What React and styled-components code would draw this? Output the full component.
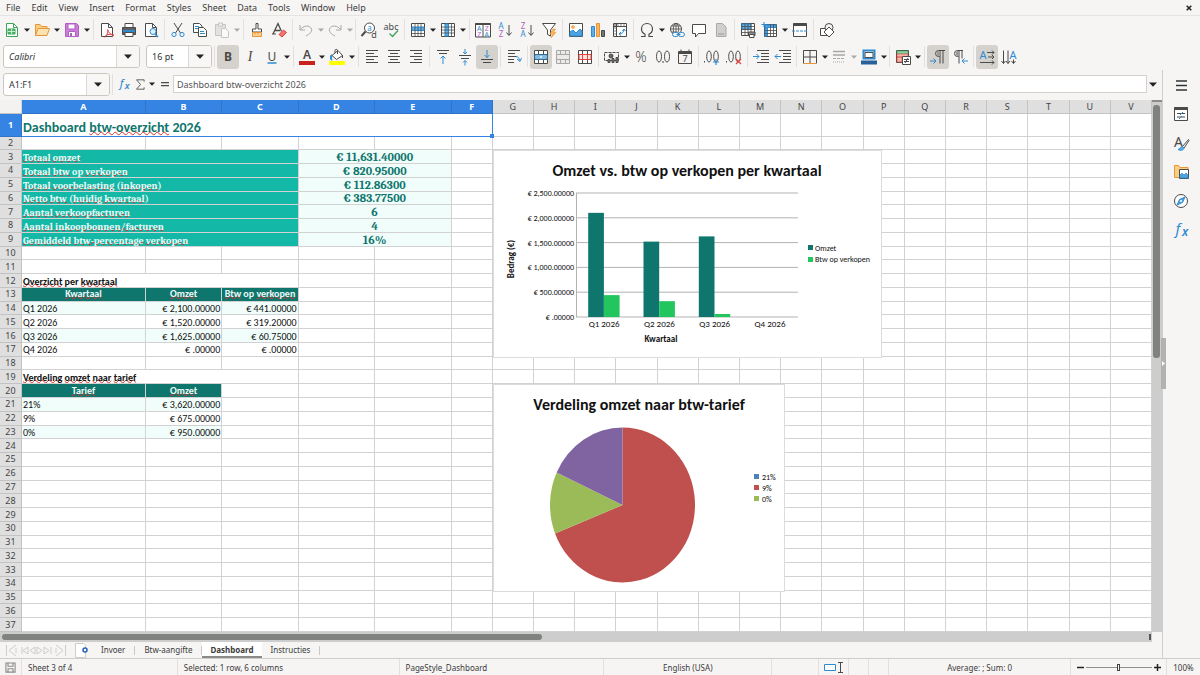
import React from "react";
import styled, { createGlobalStyle, css } from "styled-components";

const UI_FONT = `"Noto Sans", "Open Sans", sans-serif`;
const CELL_FONT = `Carlito, Lato, "Noto Sans", sans-serif`;
const SERIF_FONT = `Caladea, "Noto Serif", "DejaVu Serif Condensed", "DejaVu Serif", serif`;

const GlobalStyle = createGlobalStyle`
    * { box-sizing: border-box; }
    body {
        margin: 0;
        background: #f6f5f4;
        color: #3b3b3b;
        font-family: ${UI_FONT};
        font-size: 9px;
    }
    button, input {
        font: inherit;
        color: inherit;
        margin: 0;
        padding: 0;
        border: 0;
        background: none;
    }
`;

const Page = styled.div`
    display: flex;
    flex-direction: column;
    height: 100vh;
    overflow: hidden;
`;

/* ---------- menu and toolbars ---------- */

const MenuBar = styled.nav`
    display: flex;
    align-items: center;
    height: 16px;
    padding: 0 6px 0 6px;
    gap: 11px;
    border-bottom: 1px solid #e6e4e2;
`;

const MenuItem = styled.button`
    line-height: 16px;
`;

const CloseButton = styled.button`
    margin-left: auto;
    width: 10px;
    height: 16px;
    display: flex;
    align-items: center;
    justify-content: center;
`;

const Toolbar = styled.div`
    display: flex;
    align-items: center;
    height: 27px;
    padding-left: ${(p) => (p.$inset ? "3px" : "1px")};
`;

const Separator = styled.span`
    width: 1px;
    height: 21px;
    margin: 0 2px;
    background: #e2e0de;
    flex: none;
`;

const ToolButton = styled.button`
    width: 22px;
    height: 24px;
    flex: none;
    display: flex;
    align-items: center;
    justify-content: center;
    border-radius: 3px;
    opacity: ${(p) => (p.disabled ? 0.45 : 1)};
    background: ${(p) => (p.$active ? "#d5d1cd" : "transparent")};
`;

const DropButton = styled.button`
    width: ${(p) => (p.$narrow ? "7px" : "8px")};
    height: 24px;
    flex: none;
    display: flex;
    align-items: center;
    justify-content: center;
    opacity: ${(p) => (p.disabled ? 0.35 : 1)};
`;

const Combo = styled.div`
    display: flex;
    width: ${(p) => p.$width};
    height: 23px;
    flex: none;
    margin-right: ${(p) => (p.$spaced ? "6px" : "0")};
    border: 1px solid #cdc7c2;
    border-radius: 3px;
    background: #fff;
    overflow: hidden;
`;

const ComboInput = styled.input`
    flex: 1;
    min-width: 0;
    padding-left: 5px;
    color: #2e3436;
    font-style: ${(p) => (p.$italic ? "italic" : "normal")};
`;

const ComboButton = styled.button`
    width: 23px;
    border-left: 1px solid #dcd8d4;
    background: #f8f7f6;
    display: flex;
    align-items: center;
    justify-content: center;
`;

/* ---------- formula bar ---------- */

const FormulaBar = styled.div`
    display: flex;
    align-items: center;
    height: 30px;
    padding: 0 3px 2px 3px;
`;

const FormulaInput = styled.input`
    flex: 1;
    min-width: 0;
    height: 18px;
    margin-left: 1px;
    padding-left: 3px;
    border: 1px solid #d3d0cd;
    background: #fff;
    color: #555;
`;

const SmallButton = styled.button`
    width: ${(p) => p.$width || "14px"};
    height: 14px;
    flex: none;
    display: flex;
    align-items: center;
    justify-content: center;
`;

/* ---------- body ---------- */

const Body = styled.div`
    flex: 1;
    min-height: 0;
    display: flex;
`;

const Main = styled.main`
    flex: 1;
    min-width: 0;
    display: flex;
    flex-direction: column;
`;

const SheetArea = styled.div`
    flex: 1;
    min-height: 0;
    display: flex;
`;

const SheetFrame = styled.div`
    position: relative;
    flex: 1;
    min-width: 0;
`;

const sheetGrid = css`
    display: grid;
    grid-template-columns: 22px minmax(0, 496fr) repeat(4, minmax(0, 306fr)) repeat(17, minmax(0, 165fr));
    grid-template-rows: 14px minmax(0, 90fr) repeat(36, minmax(0, 55fr));
`;

const Sheet = styled.table`
    ${sheetGrid}
    width: 100%;
    height: 100%;
    background: #fff;
    font-family: ${CELL_FONT};
    font-size: 10px;
    color: #111;

    thead, tbody, tr { display: contents; }
`;

const HeadCell = styled.th`
    min-width: 0;
    min-height: 0;
    padding: 0;
    display: flex;
    align-items: center;
    justify-content: center;
    overflow: hidden;
    font-family: ${UI_FONT};
    font-size: 9px;
    line-height: 12px;
    font-weight: ${(p) => (p.$selected ? 700 : 400)};
    color: ${(p) => (p.$selected ? "#fff" : "#444")};
    background: ${(p) => (p.$selected ? "#3584e4" : "#dfdfdf")};
    border-right: 1px solid ${(p) => (p.$selected ? "#2f74c8" : "#c3c3c3")};
    border-bottom: 1px solid ${(p) => (p.$selected ? "#2f74c8" : "#c3c3c3")};
`;

const Corner = styled.td`
    padding: 0;
    background: #f3f2f1;
    border-right: 1px solid #d6d6d6;
    border-bottom: 1px solid #c3c3c3;
`;

const looks = {
    title: css`
        font-size: 14px;
        line-height: 18px;
        font-weight: 700;
        color: #0f766e;
        padding-top: 6px;
        overflow: visible;
        position: relative;
        border-right: 1px solid #3584e4;
        border-bottom: 1px solid #3584e4;
    `,
    label: css`
        font-family: ${SERIF_FONT};
        font-weight: 700;
        color: #e9fbf8;
        background: #14b8a6;
        padding-top: 3px;

        span { text-underline-offset: -3px; }
    `,
    figure: css`
        font-family: ${SERIF_FONT};
        font-size: 12px;
        font-weight: 700;
        color: #0f766e;
        background: #f0fdfa;
        justify-content: center;
        padding-top: 1px;
    `,
    section: css`
        font-weight: 700;

        span { text-underline-offset: -2px; }
    `,
    tableHead: css`
        font-weight: 700;
        color: #eefaf8;
        background: #0f766e;
        justify-content: center;
        padding-top: 0;

        span { text-underline-offset: -2px; }
    `,
    band: css`
        background: #f0fdfa;
    `,
};

const Misspelled = styled.span`
    text-decoration: underline wavy #d8302a 1px;
    text-underline-offset: -1px;
    text-decoration-skip-ink: none;
`;

const Cell = styled.td`
    grid-column: span ${(p) => p.colSpan || 1};
    min-width: 0;
    min-height: 0;
    padding: 2px 1px 0;
    display: flex;
    align-items: center;
    justify-content: ${(p) => (p.$right ? "flex-end" : "flex-start")};
    overflow: hidden;
    white-space: pre;
    line-height: 12px;
    border-right: 1px solid #d2d2d2;
    border-bottom: 1px solid #d2d2d2;
    ${(p) => looks[p.$look]}
`;

const FillHandle = styled.i`
    position: absolute;
    right: -2px;
    bottom: -2px;
    width: 4px;
    height: 4px;
    background: #3584e4;
`;

const ChartLayer = styled.div`
    ${sheetGrid}
    position: absolute;
    inset: 0;
`;

const ChartFrame = styled.svg`
    display: block;
    grid-column: 8;
    grid-row: ${(p) => p.$row};
    overflow: visible;
    font-family: ${CELL_FONT};
    fill: #111;
`;

const VerticalScroll = styled.div`
    width: 10px;
    padding: 3px 2px 0 1px;
    background: #cdcdcd;
    border-top: 2px solid #8b8d8b;
`;

const VerticalThumb = styled.div`
    height: 48%;
    border-radius: 3px;
    background: #80827f;
`;

const HorizontalScroll = styled.div`
    height: 10px;
    margin-right: 10px;
    padding: 2px 1px 2px 2px;
    display: flex;
    justify-content: space-between;
    background: #cdcdcd;
`;

const HorizontalThumb = styled.div`
    width: 47%;
    border-radius: 3px;
    background: #80827f;
`;

const ScrollEnd = styled.span`
    width: 2px;
    background: #555;
`;

/* ---------- sheet tabs ---------- */

const TabBar = styled.div`
    display: flex;
    height: 16px;
    font-size: 8px;
`;

const TabNav = styled.div`
    display: flex;
    align-items: center;
    width: 92px;
    padding-left: 6px;
    gap: 9px;
`;

const Tab = styled.button`
    display: flex;
    align-items: center;
    padding: 0 9px;
    border-bottom: 2px solid transparent;
    ${(p) =>
        p.$active &&
        css`
            padding: 0 8px;
            background: #fff;
            font-weight: 700;
            border-bottom-color: #8a8a8a;
        `}
`;

const TabDivider = styled.span`
    width: 1px;
    height: 9px;
    align-self: center;
    background: #c9c7c5;
`;

/* ---------- sidebar ---------- */

const Sidebar = styled.aside`
    position: relative;
    width: 38px;
    display: flex;
    flex-direction: column;
    align-items: center;
    gap: 5px;
    padding: 3px 1px 0 0;
    border-left: 1px solid #d0cecc;
`;

const SplitHandle = styled.button`
    position: absolute;
    left: -2px;
    top: 268px;
    width: 5px;
    height: 51px;
    background: #b3b2b0;
    display: flex;
    align-items: center;
    justify-content: center;
`;

/* ---------- status bar ---------- */

const StatusBar = styled.footer`
    display: grid;
    grid-template-columns: 22px 156fr 222fr 205fr 168fr 47fr 30px 20px 20px 182fr 96px 33px;
    grid-template-rows: 16px;
    height: 17px;
    border-top: 1px solid #cfcdcb;
    font-size: 8px;
`;

const StatusField = styled.div`
    display: flex;
    align-items: center;
    min-width: 0;
    padding-left: ${(p) => (p.$center ? "0" : "6px")};
    justify-content: ${(p) => (p.$center ? "center" : "flex-start")};
    border-right: ${(p) => (p.$last ? "0" : "1px solid #e2e0de")};
    white-space: nowrap;
`;

const ZoomSlider = styled.input`
    appearance: none;
    width: 66px;
    height: 12px;
    margin: 0 2px;

    &::-webkit-slider-runnable-track {
        height: 1px;
        background: #8f8f8f;
    }
    &::-webkit-slider-thumb {
        appearance: none;
        width: 3px;
        height: 7px;
        margin-top: -3px;
        background: #f6f5f4;
        border: 1px solid #444;
    }
`;

/* ---------- icons ---------- */

const dark = "#4a4a48";
const blue = "#2f8bd0";
const orange = "#e8943a";
const purple = "#b25fc4";
const red = "#e0423f";

const GlyphSvg = styled.svg`
    display: block;
    flex: none;
    overflow: visible;
`;

function Glyph({ size = 18, w = size, h = size, box = "0 0 18 18", children }) {
    return (
        <GlyphSvg width={w} height={h} viewBox={box} fill="none" stroke={dark} strokeWidth="1" aria-hidden="true">
            {children}
        </GlyphSvg>
    );
}

const Arrow = ({ big }) => (
    <svg width={big ? 8 : 6} height={big ? 5 : 4} viewBox="0 0 8 5" aria-hidden="true">
        <path d="M0 0.5h8L4 4.8z" fill="#222" />
    </svg>
);

const txt = (x, y, s, fill, size, extra) => (
    <text x={x} y={y} fontSize={size} fill={fill} stroke="none" textAnchor="middle" fontFamily={UI_FONT} {...extra}>
        {s}
    </text>
);

const lines = (rows, color = dark) =>
    rows.map(([y, x1, x2]) => <path key={y} d={`M${x1} ${y}H${x2}`} stroke={color} />);

const icons = {
    new: (
        <>
            <path d="M3.5 2.5h7l4 4v9h-11z" fill="#fff" stroke="#3fa45b" />
            <path d="M10.5 2.5v4h4" stroke="#3fa45b" />
            <path d="M5 8h7v5H5z" fill="#4cb469" stroke="#3fa45b" />
            <path d="M5 10.5h7M8.5 8v5" stroke="#c7ecd0" />
        </>
    ),
    open: (
        <>
            <path d="M2.5 14.5V3.5h4.500l1.500 2h5.500v2" fill="#f7cf83" stroke={orange} />
            <path d="M2.5 14.5l2.500-7h11.500l-2.500 7z" fill="#fce3ae" stroke={orange} />
        </>
    ),
    save: (
        <>
            <path d="M2.5 2.5h11l2 2v11h-13z" fill="#c97fd6" stroke={purple} />
            <path d="M5 3h7v5H5z" fill="#fff" stroke={purple} />
            <path d="M5.5 10.5h7v5h-7z" fill="#fff" stroke={purple} />
            <path d="M7 12h2v3H7z" fill={purple} stroke="none" />
        </>
    ),
    pdf: (
        <>
            <path d="M3.5 2.5h7l4 4v9h-11z" fill="#fff" />
            <path d="M10.5 2.5v4h4" />
            <path d="M9.5 8.5c1 3 3 5.500 6.500 6M10 9c0 3-1.500 6-3 7.500M7.500 14.500c2-1 5-1.500 8-1" stroke={red} />
        </>
    ),
    print: (
        <>
            <path d="M5 2.5h8v4H5z" fill="#fff" />
            <path d="M2.5 6.5h13v7h-13z" fill="#5b6166" />
            <path d="M3 10h12" stroke={blue} strokeWidth="2" />
            <path d="M5 11.5h8v4H5z" fill="#fff" />
        </>
    ),
    preview: (
        <>
            <path d="M3.5 2.5h7l4 4v9h-11z" fill="#fff" />
            <path d="M10.5 2.5v4h4" />
            <circle cx="11" cy="10.5" r="3" fill="#dff0fb" stroke={blue} />
            <path d="M13 13l3 3" stroke={blue} strokeWidth="1.5" />
        </>
    ),
    cut: (
        <>
            <path d="M5 2l6.500 10M13 2L6.500 12" />
            <circle cx="5" cy="13.5" r="2.1" stroke={blue} />
            <circle cx="13" cy="13.5" r="2.1" stroke={blue} />
        </>
    ),
    copy: (
        <>
            <path d="M2.5 2.5h6l2.500 2.500v6.500h-8.500z" fill="#fff" />
            <path d="M4 5.5h4M4 7.5h4" stroke={blue} />
            <path d="M7.5 6.5h5l3 3v6h-8z" fill="#fff" />
            <path d="M9 10.5h4M9 12.5h5" stroke={blue} />
        </>
    ),
    paste: (
        <>
            <path d="M2.5 3.5h10v11h-10z" fill="#cfcdcb" stroke="#8d8d8d" />
            <path d="M5.5 2h4v3h-4z" fill="#eee" stroke="#8d8d8d" />
            <path d="M8.5 7.5h4l3 3v6h-7z" fill="#fff" stroke="#8d8d8d" />
        </>
    ),
    brush: (
        <>
            <path d="M8 2.5h2v5.500h3.500v3h-9v-3H8z" fill="#fff" />
            <path d="M4.5 11.5h9v4h-9zM7 11.5v2M10 11.5v2" fill="#fbd49a" stroke={orange} />
        </>
    ),
    clear: (
        <>
            <path d="M3 13L8 2.500l3.500 8M5 9.500h5" strokeWidth="1.3" />
            <path d="M2 13h4" />
            <path d="M9 13.5l4.500-4.500 3 2.500-4.500 4.500z" fill="#ef7572" stroke={red} />
        </>
    ),
    undo: <path d="M3 4v5h5M3.5 8.500C6 4.500 13 3.500 14.500 8c.8 2.500-1.500 5-5.500 7" />,
    redo: <path d="M15 4v5h-5M14.5 8.500C12 4.500 5 3.500 3.500 8c-.8 2.500 1.500 5 5.500 7" />,
    find: (
        <>
            <circle cx="9.5" cy="7" r="5" fill="#fff" />
            <path d="M5.5 10.5L1.5 15" strokeWidth="2" />
            {txt(9.5, 9.5, "a", blue, 8)}
            {txt(14, 16.5, "d", dark, 9)}
        </>
    ),
    spell: (
        <>
            {txt(9, 8.5, "abc", dark, 9)}
            <path d="M7.5 12.5l3 3 5.500-6" stroke="#3fa45b" strokeWidth="1.3" />
        </>
    ),
    row: (
        <>
            <path d="M2.5 2.5h13v13h-13z" fill="#fff" />
            <path d="M3 6h12v3.500H3z" fill="#5fb0ea" stroke={blue} />
            <path d="M2.5 12.5h13M6 2.5v13M9 2.5v13M12 2.5v13" strokeWidth=".8" />
        </>
    ),
    column: (
        <>
            <path d="M2.5 2.5h13v13h-13z" fill="#fff" />
            <path d="M6 3h3.500v12H6z" fill="#5fb0ea" stroke={blue} />
            <path d="M2.5 6h13M2.5 9h13M2.5 12h13M12.5 2.5v13" strokeWidth=".8" />
        </>
    ),
    sort: (
        <>
            <path d="M1.5 2.5h15v13.500h-15zM9 2.5V16" fill="#fff" />
            <path d="M1.5 3h15" strokeWidth="2" />
            {txt(5.2, 9.5, "A", blue, 7)}
            {txt(5.2, 15.5, "Z", purple, 7)}
            {txt(12.8, 9.5, "Z", purple, 7)}
            {txt(12.8, 15.5, "A", blue, 7)}
        </>
    ),
    sortAsc: (
        <>
            {txt(5, 8, "A", blue, 8)}
            {txt(5, 16, "Z", purple, 8)}
            <path d="M13 4v10M10.5 11.5l2.500 3 2.500-3" />
        </>
    ),
    sortDesc: (
        <>
            {txt(5, 8, "Z", purple, 8)}
            {txt(5, 16, "A", blue, 8)}
            <path d="M13 4v10M10.5 11.5l2.500 3 2.500-3" />
        </>
    ),
    filter: (
        <>
            <path d="M2.5 2.5h13l-5 6.500v6l-3-1.500V9z" fill="#fff" />
            <path d="M13 8l-3 5h2.500l-1.500 4 5-5.500h-2.500l2-3.500z" fill="#f9b55f" stroke={orange} strokeWidth=".6" />
        </>
    ),
    image: (
        <>
            <path d="M2.5 2.5h13v13h-13z" fill="#fff" />
            <circle cx="6" cy="6" r="1.5" fill="#f9b55f" stroke={orange} strokeWidth=".6" />
            <path d="M3 14v-3l3-2 3 3 4-4 2 2v5H3z" fill="#4fa3df" stroke={blue} />
        </>
    ),
    chart: (
        <>
            <path d="M2.5 5.5h3v10h-3z" fill="#5fb0ea" stroke={blue} />
            <path d="M7.5 2.5h3v13h-3z" fill="#f9b55f" stroke={orange} />
            <path d="M12.5 9.5h3v6h-3z" fill="#777" />
        </>
    ),
    pivot: (
        <>
            <path d="M2.5 2.5h13v13h-13zM2.5 5.5h13M5.5 2.5v13" fill="#fff" />
            <path d="M3 4h12M4 3v12" stroke="#888" strokeDasharray="2 1" />
            <path d="M8 13c3 0 5-2 5-5M8 13l2-2M8 13l2 1.500M13 8l-1.500 2M13 8l1.500 2" stroke={blue} />
        </>
    ),
    omega: (
        <path
            d="M3 15.5h4v-2.200C4.500 12 3.500 10.200 3.500 8c0-3.200 2.300-5.500 5.500-5.500s5.500 2.300 5.500 5.500c0 2.200-1 4-3.500 5.300v2.200h4"
            strokeWidth="1.2"
        />
    ),
    link: (
        <>
            <circle cx="8" cy="8" r="5.5" />
            <path d="M2.5 8h11M8 2.5v11M3.500 5h9M3.500 11h6" strokeWidth=".8" />
            <ellipse cx="8" cy="8" rx="2.7" ry="5.5" strokeWidth=".8" />
            <rect x="4.5" y="11.5" width="6" height="4" rx="2" stroke={blue} fill="#f6f5f4" />
            <rect x="10.5" y="11.5" width="6" height="4" rx="2" stroke={blue} fill="#f6f5f4" />
            <path d="M8.5 13.5h4" stroke={blue} />
        </>
    ),
    comment: <path d="M2.5 3.5h13v9h-7l-3 3.500v-3.500h-3z" fill="#fff" />,
    headerFooter: (
        <>
            <path d="M4.5 2.5h6l3.500 3.500v9.500H4.500z" fill="#cfcfcf" stroke="#aaa" />
            <path d="M6 13h6" stroke="#999" />
        </>
    ),
    printArea: (
        <>
            <path d="M2.5 2.5h13v12h-13z" fill="#fff" />
            <path d="M3 3h9v5H3z" fill="#5fb0ea" stroke={blue} />
            <path d="M2.5 5.5h13M2.5 8.5h13M2.5 11.5h13M6 2.5v12M9 2.5v12M12 2.5v12" strokeWidth=".8" />
            <path d="M9.500 11h6.500v3.500H9.500z" fill="#8d9398" />
            <path d="M10.5 13.500h4.500v3h-4.500z" fill="#fff" />
        </>
    ),
    freeze: (
        <>
            <path d="M3.5 3.5h12v12h-12z" fill="#fff" />
            <path d="M4 4h11v2.500H4zM4 6.500h2.500V15H4z" fill="#4fa3df" stroke={blue} />
            <path d="M3.5 9.5h12M3.5 12.5h12M9.5 3.5v12M12.5 3.5v12" strokeWidth=".8" />
            <path d="M3 1v5M.5 3.500h5" stroke={blue} />
        </>
    ),
    split: (
        <>
            <path d="M2.5 2.5h13v13h-13z" fill="#fff" />
            <path d="M2.5 3.5h13" strokeWidth="3" />
            <path d="M1 10h16" stroke={blue} strokeDasharray="3 1" />
        </>
    ),
    shapes: (
        <>
            <path d="M2.5 7.5h7v7h-7z" fill="#fff" />
            <circle cx="11" cy="6.5" r="4" fill="#f6f5f4" />
            <path d="M11 6l5 5-5 5-5-5z" fill="#fff" />
        </>
    ),
    bold: txt(9, 13, "B", dark, 12, { fontWeight: 700 }),
    italic: txt(9, 13, "I", dark, 14, { fontStyle: "italic", fontFamily: "Liberation Serif" }),
    underline: (
        <>
            {txt(9, 12.5, "U", dark, 12)}
            <path d="M4.5 15h9" stroke={blue} strokeWidth="1.5" />
        </>
    ),
    fontColor: (
        <>
            {txt(9, 11, "A", dark, 12, { fontWeight: 600 })}
            <path d="M1 15h16" stroke="#c9211e" strokeWidth="4" />
        </>
    ),
    highlight: (
        <>
            <path d="M4 7.5l6-5 4.500 5-6 4z" fill="#fff" />
            <path d="M4 12c-1.500-1-1.500-4 0-5" stroke={blue} strokeWidth="2" />
            <path d="M7 5V2.500c0-1.500 2.500-1.500 2.500 0V6M14.500 7v3" />
            <path d="M1 15h16" stroke="#ffff00" strokeWidth="4" />
        </>
    ),
    alignLeft: lines([[2.5, 3, 15], [5.5, 3, 11], [8.5, 3, 15], [11.5, 3, 11], [14.5, 3, 15]]),
    alignCenter: lines([[2.5, 3, 15], [5.5, 5, 13], [8.5, 3, 15], [11.5, 5, 13], [14.5, 3, 15]]),
    alignRight: lines([[2.5, 3, 15], [5.5, 7, 15], [8.5, 3, 15], [11.5, 7, 15], [14.5, 3, 15]]),
    alignTop: (
        <>
            {lines([[2.5, 3, 15], [5.5, 5, 13]])}
            <path d="M9 16V8M6.5 10.5L9 8l2.500 2.500" stroke={blue} />
        </>
    ),
    alignMiddle: (
        <>
            {lines([[7.5, 3, 15], [10.5, 5, 13]])}
            <path d="M9 1v5M7 4l2 2 2-2M9 17.5v-5M7 14.5l2-2 2 2" stroke={blue} />
        </>
    ),
    alignBottom: (
        <>
            {lines([[11.5, 3, 15], [14.5, 5, 13]])}
            <path d="M9 2v7.500M6.500 7L9 9.500 11.500 7" stroke={blue} />
        </>
    ),
    wrap: (
        <>
            {lines([[2.5, 3, 15], [5.5, 3, 10], [8.5, 3, 12], [11.5, 3, 9], [14.5, 3, 9]])}
            <path d="M11 8.5c2 0 3 1 3.500 4M12 11l3 2.500L16.500 10" stroke={blue} />
        </>
    ),
    mergeCenter: (
        <>
            <path d="M2.5 2.5h13v13h-13z" fill="#fff" />
            <path d="M2.5 6.5h13M2.5 11.5h13M6.5 2.5v4M11.5 2.5v4M6.5 11.5v4M11.5 11.5v4" />
            <path d="M3 7h12v4H3z" fill="#d6ecfa" stroke={blue} />
            <path d="M4 9h10" stroke={blue} strokeDasharray="4 2" />
        </>
    ),
    merge: (
        <>
            <path d="M2.5 2.5h13v13h-13z" fill="#ddd" />
            <path d="M2.5 6.5h13M2.5 11.5h13M6.5 2.5v4M11.5 2.5v4M6.5 11.5v4M11.5 11.5v4" />
        </>
    ),
    unmerge: (
        <>
            <path d="M2.5 2.5h13v13h-13z" fill="#fff" />
            <path d="M2.5 6.5h13M2.5 11.5h13M6.5 2.5v13M11.5 2.5v13" />
            <path d="M3 6.5h12v5H3zM6.500 6.500v5M11.500 6.500v5" fill="#fde3e2" stroke={red} />
        </>
    ),
    currency: (
        <>
            <path d="M1.5 4.5h14v8h-14z" strokeDasharray="3 1" />
            <circle cx="8" cy="8" r="2" fill="#666" />
            <path d="M5 14.5v-3h2v3zM9 14.500v-4h2v4zM13 14.500v-5h2v5z" fill="#777" />
        </>
    ),
    percent: txt(9, 14, "%", dark, 14, { fontWeight: 300 }),
    number: (
        <>
            <ellipse cx="5" cy="8.5" rx="2.5" ry="5.5" />
            <ellipse cx="13" cy="8.5" rx="2.5" ry="5.5" />
            <path d="M9 13v2" />
        </>
    ),
    date: (
        <>
            <path d="M2.5 3.5h13v12h-13zM5 1.500v3M13 1.500v3" />
            <path d="M2.5 5h13" strokeWidth="2" />
            {txt(9, 14, "7", dark, 9)}
        </>
    ),
    addDecimal: (
        <>
            <path d="M1.5 13v1.500" />
            <ellipse cx="6" cy="8.5" rx="2.3" ry="5.5" />
            <ellipse cx="13" cy="8.5" rx="2.3" ry="5.5" />
            <path d="M13 11v6M10 14h6" stroke={blue} strokeWidth="1.2" />
        </>
    ),
    deleteDecimal: (
        <>
            <path d="M1.5 13v1.500" />
            <ellipse cx="6" cy="8.5" rx="2.3" ry="5.5" />
            <ellipse cx="13" cy="8.5" rx="2.3" ry="5.5" />
            <path d="M11 11l5 5M16 11l-5 5" stroke={red} strokeWidth="1.2" />
        </>
    ),
    indent: (
        <>
            {lines([[2.5, 5, 17], [5.5, 9, 17], [8.5, 9, 17], [11.5, 9, 17], [14.5, 5, 17]])}
            <path d="M1 8.5h6M4.500 6L7 8.500 4.500 11" stroke={blue} />
        </>
    ),
    outdent: (
        <>
            {lines([[2.5, 5, 17], [5.5, 9, 17], [8.5, 9, 17], [11.5, 9, 17], [14.5, 5, 17]])}
            <path d="M7 8.5H1M3.500 6L1 8.500 3.500 11" stroke={blue} />
        </>
    ),
    borders: (
        <>
            <path d="M2.5 2.5h13v13M2.5 2.5v13M9 2.5v13M2.5 9h13" />
            <path d="M2.5 15.5h13" stroke={orange} />
        </>
    ),
    borderStyle: (
        <>
            <path d="M3 3.5h12M3 7h12" strokeWidth="1.5" />
            <path d="M3 10.5h12" strokeDasharray="3 1" />
            <path d="M3 14h12" strokeDasharray="1 1" />
        </>
    ),
    borderColor: (
        <>
            <path d="M3.5 2.5h11v8h-11z" fill="#fff" stroke={blue} strokeWidth="2" />
            <path d="M5 4.5h8v5H5z" />
            <path d="M1 14.5h16" stroke="#2a6099" strokeWidth="4" />
        </>
    ),
    conditional: (
        <>
            <path d="M2.5 2.5h12v12h-12z" fill="#fff" />
            <path d="M3 3h11v2.500H3z" fill="#8fd19e" stroke="#3fa45b" strokeWidth=".6" />
            <path d="M3 6h11v3H3zM3 9h5v5H3z" fill="#f2b5a8" stroke={red} strokeWidth=".6" />
            <path d="M8.5 8.5h8v8h-8z" fill="#fff" />
            <path d="M10 11.5h5M10 13.5h5M14 10l-3 5" />
        </>
    ),
    ltr: (
        <>
            <path d="M16 2.5H9.500a3 3 0 000 6h1M11 2.500v13M14 2.500v13" />
            <path d="M9 3a3 3 0 000 5h2V3z" fill="#9a9a98" stroke="none" />
            <path d="M1 13h6M4.5 10.5L7 13l-2.500 2.500" stroke={blue} />
        </>
    ),
    rtl: (
        <>
            <path d="M12 2.5H6.500a3 3 0 000 6h1M8 2.500v13M11 2.500v8" />
            <path d="M6 3a3 3 0 000 5h2V3z" fill="#9a9a98" stroke="none" />
            <path d="M17 13h-6M13.5 10.5L11 13l2.500 2.500" stroke={blue} />
        </>
    ),
    textHorizontal: (
        <>
            {txt(5, 10.5, "A", blue, 11)}
            <path d="M9 4.5h7M14 2.500l2 2-2 2M10 9h6M14 7l2 2-2 2M2 14.500h14M14 12.500l2 2-2 2" />
        </>
    ),
    textVertical: (
        <>
            {txt(13, 10.5, "A", blue, 11)}
            <path d="M3.5 2.5v13M1.500 13l2 2.500 2-2.500M8 2.500v13M6 13l2 2.500 2-2.500M13.500 11.500v4M11.500 13l2 2.500 2-2.500" />
        </>
    ),
    fx: (
        <>
            {txt(6, 13, "f", blue, 15, { fontStyle: "italic" })}
            {txt(13, 15, "x", blue, 12, { fontStyle: "italic", fontWeight: 600 })}
        </>
    ),
    sigma: <path d="M14 5V2.500H3.500L9 9l-5.500 6.500H14V13" strokeWidth="1.2" />,
    equals: <path d="M3 7h12M3 11.5h12" strokeWidth="2" />,
    menu: <path d="M4 5h11M4 9.5h11M4 14h11" stroke="#2e3436" strokeWidth="1.5" />,
    properties: (
        <>
            <path d="M2.5 2.5h13v13h-13z" fill="#fff" />
            <path d="M2.5 3.5h13" strokeWidth="3" />
            <path d="M5 8.5h8M5 12h8" />
            <path d="M11 7l-3 3M10 11l-3 3" stroke={blue} />
        </>
    ),
    styles: (
        <>
            {txt(6.5, 12.5, "A", dark, 14)}
            <path d="M16.5 5.5l-6 7 1.500 1.500 5-7.500z" fill="#fff" />
            <path d="M10.5 12.5c-2 0-2 2.500-4.500 3 2.500 1.500 6 .5 6-1.500z" fill="#5fb0ea" stroke={blue} />
        </>
    ),
    gallery: (
        <>
            <path d="M2.5 14.5v-12h4l1.500 2h8v3" fill="#f7cf83" stroke={orange} />
            <path d="M2.5 14.5h5v-8" fill="#f7cf83" stroke={orange} />
            <path d="M7.5 6.5h9v9h-9z" fill="#fff" />
            <path d="M8 14v-2l2-2 2 2 2-2 2 2v3H8z" fill="#4fa3df" stroke={blue} strokeWidth=".7" />
        </>
    ),
    navigator: (
        <>
            <circle cx="9" cy="9" r="6.5" fill="#fff" />
            <path d="M13 5l-2.500 5.500L5 13l2.500-5.500z" fill="#4fa3df" stroke={blue} />
            <circle cx="9" cy="9" r="1" fill="#fff" stroke="none" />
        </>
    ),
    statusSave: <path d="M3.5 3.5h11v11h-11zM6 3.500v4h6v-4M6 14.500v-4h6v4" stroke="#8a8a88" strokeWidth="1.3" />,
};

// "|" is a separator; a trailing "v" option adds a drop-down arrow
const standardBar = [
    ["new", "New", "v"], ["open", "Open", "v"], ["save", "Save", "v"], "|",
    ["pdf", "Export as PDF"], ["print", "Print"], ["preview", "Print preview"], "|",
    ["cut", "Cut"], ["copy", "Copy"], ["paste", "Paste", "v off"], "|",
    ["brush", "Clone formatting"], ["clear", "Clear formatting"], "|",
    ["undo", "Undo", "v off narrow"], ["redo", "Redo", "v off narrow"], "|",
    ["find", "Find and replace"], ["spell", "Spelling"], "|",
    ["row", "Row", "v"], ["column", "Column", "v"], "|",
    ["sort", "Sort"], ["sortAsc", "Sort ascending"], ["sortDesc", "Sort descending"], ["filter", "AutoFilter"], "|",
    ["image", "Image"], ["chart", "Chart"], ["pivot", "Pivot table"], "|",
    ["omega", "Symbol", "v"], ["link", "Hyperlink"], ["comment", "Comment"], ["headerFooter", "Headers and footers"], "|",
    ["printArea", "Print area"], ["freeze", "Freeze", "v"], ["split", "Split window"], "|",
    ["shapes", "Draw functions"],
];

const formatBar = [
    "|", ["bold", "Bold", "on"], ["italic", "Italic"], ["underline", "Underline", "v"], "|",
    ["fontColor", "Font color", "v"], ["highlight", "Highlighting", "v"], "|",
    ["alignLeft", "Align left"], ["alignCenter", "Center"], ["alignRight", "Align right"], "|",
    ["alignTop", "Align top"], ["alignMiddle", "Center vertically"], ["alignBottom", "Align bottom", "on"], "|",
    ["wrap", "Wrap text"], "|",
    ["mergeCenter", "Merge and center", "on"], ["merge", "Merge", "off"], ["unmerge", "Unmerge"], "|",
    ["currency", "Currency", "v narrow"], ["percent", "Percent"], ["number", "Number"], ["date", "Date"], "|",
    ["addDecimal", "Add decimal"], ["deleteDecimal", "Delete decimal"], "|",
    ["indent", "Increase indent"], ["outdent", "Decrease indent"], "|",
    ["borders", "Borders", "v narrow"], ["borderStyle", "Border style", "v off"], ["borderColor", "Border color", "v narrow"], "|",
    ["conditional", "Conditional", "v"], "|",
    ["ltr", "Left to right", "on"], ["rtl", "Right to left"], "|",
    ["textHorizontal", "Text horizontal", "on"], ["textVertical", "Text vertical"],
];

function Tools({ items }) {
    return items.map((item, i) => {
        if (item === "|") return <Separator key={i} />;
        const [name, label, flags = ""] = item;
        const has = (flag) => flags.split(" ").includes(flag);
        return (
            <React.Fragment key={i}>
                <ToolButton aria-label={label} disabled={has("off")} $active={has("on")}>
                    <Glyph>{icons[name]}</Glyph>
                </ToolButton>
                {has("v") && (
                    <DropButton aria-label={label + " options"} disabled={has("off")} $narrow={has("narrow")}>
                        <Arrow />
                    </DropButton>
                )}
            </React.Fragment>
        );
    });
}

function ComboBox({ label, value, width, italic, spaced }) {
    return (
        <Combo $width={width} $spaced={spaced}>
            <ComboInput aria-label={label} defaultValue={value} $italic={italic} />
            <ComboButton aria-label={label + " list"}>
                <Arrow big />
            </ComboButton>
        </Combo>
    );
}

/* ---------- sheet data ---------- */

const letters = "ABCDEFGHIJKLMNOPQRSTUV".split("");

// words between underscores are flagged by the spell checker
const kpis = [
    ["_Totaal_ _omzet_", "€ 11,631.40000"],
    ["_Totaal_ _btw_ op _verkopen_", "€ 820.95000"],
    ["_Totaal_ _voorbelasting_ (_inkopen_)", "€ 112.86300"],
    ["_Netto_ _btw_ (_huidig_ _kwartaal_)", "€ 383.77500"],
    ["_Aantal_ _verkoopfacturen_", "6"],
    ["_Aantal_ _inkoopbonnen/facturen_", "4"],
    ["_Gemiddeld_ _btw-percentage_ _verkopen_", "16%"],
];

const quarters = [
    ["Q1 2026", 2100, 441, "€ 2,100.00000", "€ 441.00000"],
    ["Q2 2026", 1520, 319.2, "€ 1,520.00000", "€ 319.20000"],
    ["Q3 2026", 1625, 60.75, "€ 1,625.00000", "€ 60.75000"],
    ["Q4 2026", 0, 0, "€ .00000", "€ .00000"],
];

const rates = [
    ["21%", 3620, "€ 3,620.00000"],
    ["9%", 675, "€ 675.00000"],
    ["0%", 950, "€ 950.00000"],
];

const rows = {
    1: [{ text: "Dashboard _btw-overzicht_ 2026", span: 6, look: "title" }],
    12: [{ text: "_Overzicht_ per _kwartaal_", span: 3, look: "section" }],
    13: ["_Kwartaal_", "_Omzet_", "_Btw_ op _verkopen_"].map((text) => ({ text, look: "tableHead" })),
    19: [{ text: "_Verdeling_ _omzet_ _naar_ _tarief_", span: 3, look: "section" }],
    20: ["_Tarief_", "_Omzet_"].map((text) => ({ text, look: "tableHead" })),
};

kpis.forEach(([label, value], i) => {
    rows[3 + i] = [
        { text: label, span: 3, look: "label" },
        { text: value, span: 2, look: "figure" },
    ];
});
quarters.forEach(([name, , , sales, vat], i) => {
    const look = i % 2 ? undefined : "band";
    rows[14 + i] = [{ text: name, look }, { text: sales, look, right: true }, { text: vat, look, right: true }];
});
rates.forEach(([name, , sales], i) => {
    const look = i % 2 ? undefined : "band";
    rows[21 + i] = [{ text: name, look }, { text: sales, look, right: true }];
});

function SpellText({ text }) {
    return (
        <span>
            {text.split("_").map((part, i) => (i % 2 ? <Misspelled key={i}>{part}</Misspelled> : part))}
        </span>
    );
}

function SheetRow({ number }) {
    const cells = rows[number] || [];
    const used = cells.reduce((sum, c) => sum + (c.span || 1), 0);
    return (
        <tr>
            <HeadCell scope="row" $selected={number === 1}>{number}</HeadCell>
            {cells.map((c, i) => (
                <Cell key={i} colSpan={c.span || 1} $look={c.look} $right={c.right}>
                    <SpellText text={c.text} />
                    {c.look === "title" && <FillHandle />}
                </Cell>
            ))}
            {letters.slice(used).map((l) => (
                <Cell key={l} />
            ))}
        </tr>
    );
}

/* ---------- charts ---------- */

const axisLabels = ["€ .00000", "€ 500.00000", "€ 1,000.00000", "€ 1,500.00000", "€ 2,000.00000", "€ 2,500.00000"];

function BarChart() {
    const base = 167;
    const height = 124;
    const y = (value) => base - (value / 2500) * height;
    return (
        <ChartFrame $row={4} width="389" height="208" role="img" aria-label="Omzet vs. btw op verkopen per kwartaal">
            <rect x=".5" y=".5" width="388" height="207" fill="#fff" stroke="#dcdcdc" />
            <text x="194" y="26" fontSize="16" fontWeight="700" textAnchor="middle">
                Omzet vs. btw op verkopen per kwartaal
            </text>
            {axisLabels.map((label, i) => (
                <g key={label}>
                    <path d={`M83 ${y(i * 500)}H305`} stroke="#b3b3b3" />
                    <text x="81" y={y(i * 500) + 3} fontSize="8" textAnchor="end">{label}</text>
                </g>
            ))}
            <path d="M83.5 43V167" stroke="#b3b3b3" />
            {quarters.map(([name, sales, vat], i) => {
                const x = 83.5 + i * 55.3;
                return (
                    <g key={name}>
                        <rect x={x + 11.7} y={y(sales)} width="15.7" height={base - y(sales)} fill="#0f766e" />
                        <rect x={x + 27.4} y={y(vat)} width="15.7" height={base - y(vat)} fill="#22c55e" />
                        <text x={x + 27.6} y="177" fontSize="9" textAnchor="middle">{name}</text>
                    </g>
                );
            })}
            <text x="168" y="192" fontSize="9" fontWeight="700" textAnchor="middle">Kwartaal</text>
            <text transform="translate(21 109) rotate(-90)" fontSize="9" fontWeight="700" textAnchor="middle">
                Bedrag (€)
            </text>
            <rect x="315" y="95" width="5" height="5" fill="#0f766e" />
            <text x="322" y="101" fontSize="8">Omzet</text>
            <rect x="315" y="107" width="5" height="5" fill="#22c55e" />
            <text x="322" y="112" fontSize="8">Btw op verkopen</text>
        </ChartFrame>
    );
}

const pieColors = ["#c0504d", "#9bbb59", "#8064a2"];
const legendColors = ["#4f81bd", "#c0504d", "#9bbb59"];

function PieChart() {
    const cx = 129.5;
    const cy = 121;
    const rx = 72.5;
    const ry = 77.5;
    const total = rates.reduce((sum, r) => sum + r[1], 0);
    const point = (share) => {
        const a = share * 2 * Math.PI;
        return `${cx + rx * Math.sin(a)} ${cy - ry * Math.cos(a)}`;
    };
    let from = 0;
    return (
        <ChartFrame $row={21} width="292" height="208" role="img" aria-label="Verdeling omzet naar btw-tarief">
            <rect x=".5" y=".5" width="291" height="207" fill="#fff" stroke="#dcdcdc" />
            <text x="146" y="26" fontSize="16" fontWeight="700" textAnchor="middle">
                Verdeling omzet naar btw-tarief
            </text>
            {rates.map(([name, value], i) => {
                const start = from;
                from += value / total;
                const large = value / total > 0.5 ? 1 : 0;
                return (
                    <path
                        key={name}
                        d={`M${cx} ${cy}L${point(start)}A${rx} ${ry} 0 ${large} 1 ${point(from)}Z`}
                        fill={pieColors[i]}
                    />
                );
            })}
            {rates.map(([name], i) => (
                <g key={name}>
                    <rect x="261" y={90 + i * 11} width="5" height="5" fill={legendColors[i]} />
                    <text x="269" y={96 + i * 11} fontSize="8">{name}</text>
                </g>
            ))}
        </ChartFrame>
    );
}

/* ---------- page ---------- */

const menus = ["File", "Edit", "View", "Insert", "Format", "Styles", "Sheet", "Data", "Tools", "Window", "Help"];
const panels = [
    ["menu", "Sidebar settings"], ["properties", "Properties"], ["styles", "Styles"],
    ["gallery", "Gallery"], ["navigator", "Navigator"], ["fx", "Functions"],
];

function App() {
    return (
        <Page>
            <GlobalStyle />
            <MenuBar>
                {menus.map((m) => (
                    <MenuItem key={m}>{m}</MenuItem>
                ))}
                <CloseButton aria-label="Close document">
                    <svg width="6" height="6" viewBox="0 0 6 6">
                        <path d="M.7.7l4.600 4.600M5.300.7L.7 5.300" stroke="#222" strokeWidth="1.5" />
                    </svg>
                </CloseButton>
            </MenuBar>
            <Toolbar>
                <Tools items={standardBar} />
            </Toolbar>
            <Toolbar $inset>
                <ComboBox label="Font name" value="Calibri" width="137px" italic spaced />
                <ComboBox label="Font size" value="16 pt" width="66px" />
                <Tools items={formatBar} />
            </Toolbar>
            <Body>
                <Main>
                    <FormulaBar>
                        <ComboBox label="Name box" value="A1:F1" width="107px" />
                        <Separator />
                        <SmallButton aria-label="Function wizard" $width="18px"><Glyph size={14}>{icons.fx}</Glyph></SmallButton>
                        <SmallButton aria-label="Select function"><Glyph size={13}>{icons.sigma}</Glyph></SmallButton>
                        <SmallButton aria-label="Function list" $width="10px"><Arrow /></SmallButton>
                        <SmallButton aria-label="Formula" $width="15px"><Glyph size={12}>{icons.equals}</Glyph></SmallButton>
                        <FormulaInput aria-label="Input line" defaultValue="Dashboard btw-overzicht 2026" />
                        <SmallButton aria-label="Expand formula bar" $width="12px"><Arrow big /></SmallButton>
                    </FormulaBar>
                    <SheetArea>
                        <SheetFrame>
                            <Sheet>
                                <thead>
                                    <tr>
                                        <Corner />
                                        {letters.map((l, i) => (
                                            <HeadCell key={l} scope="col" $selected={i < 6}>{l}</HeadCell>
                                        ))}
                                    </tr>
                                </thead>
                                <tbody>
                                    {Array.from({ length: 37 }, (_, i) => (
                                        <SheetRow key={i} number={i + 1} />
                                    ))}
                                </tbody>
                            </Sheet>
                            <ChartLayer>
                                <BarChart />
                                <PieChart />
                            </ChartLayer>
                        </SheetFrame>
                        <VerticalScroll>
                            <VerticalThumb />
                        </VerticalScroll>
                    </SheetArea>
                    <HorizontalScroll>
                        <HorizontalThumb />
                        <ScrollEnd />
                    </HorizontalScroll>
                    <TabBar>
                        <TabNav>
                            <Glyph w={60} h={13} box="0 0 60 13">
                                <path
                                    d="M.5 1v11M10 1L3 6.500l7 5.500M10 4v5M16 3v7M22 3l-5 3.500 5 3.500zM29 3l-5 3.500 5 3.500zM31 3l5 3.500-5 3.500zM38 3l5 3.500-5 3.500zM45 3v7M50 1l7 5.500-7 5.500M50 4v5M59.500 1v11"
                                    stroke="#cfcdcb"
                                />
                            </Glyph>
                            <Glyph w={13} h={15} box="0 0 13 15">
                                <path d="M.5.5h8l2 2v12H.5z" fill="#fff" stroke="#cfcdcb" />
                                <circle cx="10" cy="7" r="2" fill="#fff" stroke="#2a62b8" strokeWidth="1.5" />
                            </Glyph>
                        </TabNav>
                        <Tab>Invoer</Tab>
                        <TabDivider />
                        <Tab>Btw-aangifte</Tab>
                        <TabDivider />
                        <Tab $active>Dashboard</Tab>
                        <Tab>Instructies</Tab>
                        <TabDivider />
                    </TabBar>
                </Main>
                <Sidebar>
                    {panels.map(([name, label]) => (
                        <ToolButton key={name} aria-label={label}>
                            <Glyph>{icons[name]}</Glyph>
                        </ToolButton>
                    ))}
                    <SplitHandle aria-label="Hide sidebar">
                        <svg width="3" height="5" viewBox="0 0 3 5">
                            <path d="M0 0l3 2.500L0 5z" fill="#fff" />
                        </svg>
                    </SplitHandle>
                </Sidebar>
            </Body>
            <StatusBar>
                <StatusField $center><Glyph size={15}>{icons.statusSave}</Glyph></StatusField>
                <StatusField>Sheet 3 of 4</StatusField>
                <StatusField>Selected: 1 row, 6 columns</StatusField>
                <StatusField>PageStyle_Dashboard</StatusField>
                <StatusField $center>English (USA)</StatusField>
                <StatusField />
                <StatusField $center>
                    <Glyph w={20} h={12} box="0 0 20 12">
                        <path d="M.5 3.5h11v6H.5z" fill="#fff" stroke={blue} />
                        <path d="M14 1.5h5M16.5 1.5v10M14 11.5h5" />
                    </Glyph>
                </StatusField>
                <StatusField />
                <StatusField />
                <StatusField $center>Average: ; Sum: 0</StatusField>
                <StatusField $center>
                    <SmallButton aria-label="Zoom out" $width="7px">
                        <Glyph w={7} h={7} box="0 0 7 7"><path d="M0 3.5h7" stroke="#222" strokeWidth="1.5" /></Glyph>
                    </SmallButton>
                    <ZoomSlider type="range" aria-label="Zoom" defaultValue="50" />
                    <SmallButton aria-label="Zoom in" $width="7px">
                        <Glyph w={7} h={7} box="0 0 7 7"><path d="M0 3.5h7M3.5 0v7" stroke="#222" strokeWidth="1.5" /></Glyph>
                    </SmallButton>
                </StatusField>
                <StatusField $center $last>100%</StatusField>
            </StatusBar>
        </Page>
    );
}

export default App;
